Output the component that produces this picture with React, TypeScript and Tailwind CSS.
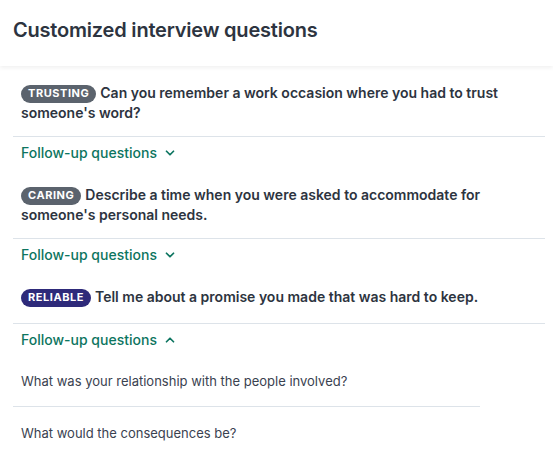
import { ChevronDown, ChevronUp } from "lucide-react";

type Question = {
  trait: string;
  tone: "gray" | "indigo";
  text: string;
  open?: boolean;
  followUps?: string[];
};

const QUESTIONS: Question[] = [
  {
    trait: "Trusting",
    tone: "gray",
    text: "Can you remember a work occasion where you had to trust someone's word?",
  },
  {
    trait: "Caring",
    tone: "gray",
    text: "Describe a time when you were asked to accommodate for someone's personal needs.",
  },
  {
    trait: "Reliable",
    tone: "indigo",
    text: "Tell me about a promise you made that was hard to keep.",
    open: true,
    followUps: [
      "What was your relationship with the people involved?",
      "What would the consequences be?",
    ],
  },
];

function TraitBadge({ label, tone }: { label: string; tone: Question["tone"] }) {
  return (
    <span
      className={
        "inline-flex items-center h-[18px] px-[7px] mr-[4px] rounded-full text-[11px] font-bold uppercase tracking-[0.05em] text-white align-[1px] leading-none " +
        (tone === "indigo" ? "bg-[#2e2a7a]" : "bg-[#5b636d]")
      }
    >
      {label}
    </span>
  );
}

export default function App() {
  return (
    <div className="w-[553px] h-[456px] bg-white overflow-hidden font-['Inter',sans-serif] text-[#2d3440]">
      <header className="h-[66px] flex items-center px-[13px] shadow-[0_2px_4px_rgba(0,0,0,0.06)] relative">
        <h1 className="text-[20px] font-semibold tracking-[-0.01em] text-[#2d3440] -mt-[7px]">
          Customized interview questions
        </h1>
      </header>

      <div className="pl-[13px] pr-[8px] pt-[17px]">
        {QUESTIONS.map((q) => (
          <section key={q.trait}>
            <div className="px-[8px] pb-[13px] border-b border-[#dde3e9]">
              <p className="min-h-[23px] text-[14px] font-semibold leading-[20px]">
                <TraitBadge label={q.trait} tone={q.tone} />
                {q.text}
              </p>
            </div>
            <button className="flex items-center gap-[6px] px-[8px] pt-[5px] pb-[22px] text-[14px] font-medium text-[#0d7560]">
              Follow-up questions
              {q.open ? (
                <ChevronUp className="w-[14px] h-[14px]" strokeWidth={3} />
              ) : (
                <ChevronDown className="w-[14px] h-[14px]" strokeWidth={3} />
              )}
            </button>
            {q.open && q.followUps && (
              <ul className="w-[467px]">
                {q.followUps.map((f, i) => (
                  <li
                    key={f}
                    className={
                      "px-[8px] text-[13px] leading-[18px] text-[#3a4250] " +
                      (i < q.followUps!.length - 1 ? "pb-[16px] border-b border-[#dde3e9]" : "pt-[17px]")
                    }
                  >
                    {f}
                  </li>
                ))}
              </ul>
            )}
          </section>
        ))}
      </div>
    </div>
  );
}
